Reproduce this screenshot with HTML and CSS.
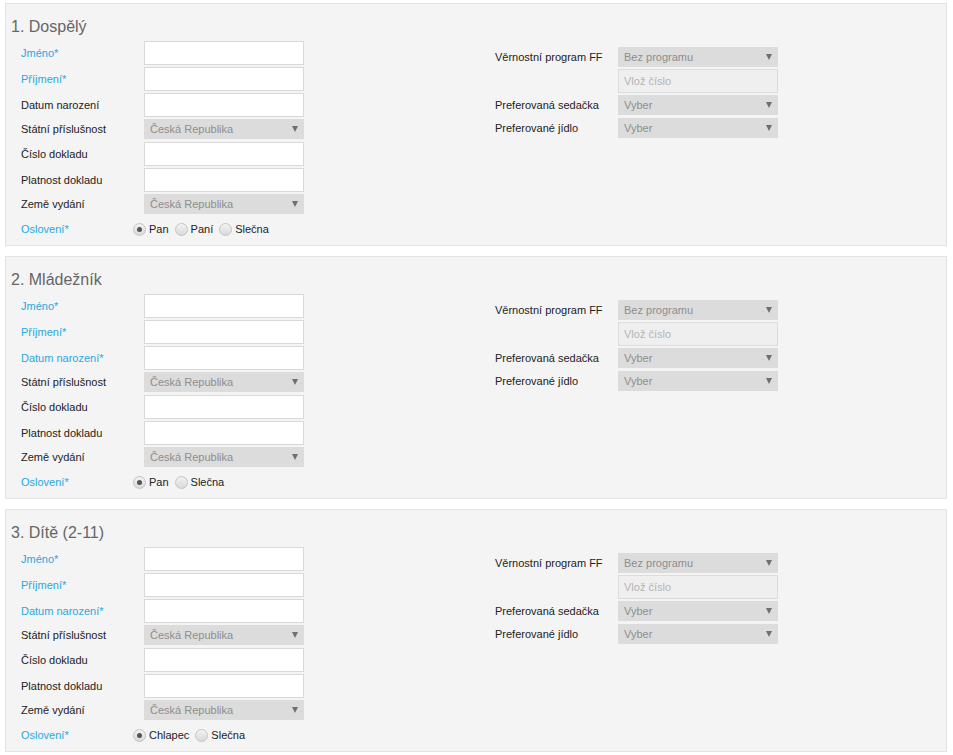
FILE: index.html
```html
<!DOCTYPE html>
<html lang="cs">
<head>
<meta charset="utf-8">
<title>Cestující</title>
<link rel="stylesheet" href="styles.css">
</head>
<body>
<div class="page">

  <section class="pax">
    <h2 class="pax-title">1. Dospělý</h2>
    <div class="pax-body">
      <div class="col col-left">
        <div class="row"><span class="lbl req">Jméno*</span><span class="inp"></span></div>
        <div class="row"><span class="lbl req">Příjmení*</span><span class="inp"></span></div>
        <div class="row"><span class="lbl">Datum narození</span><span class="inp"></span></div>
        <div class="row row-sel"><span class="lbl">Státní příslušnost</span><span class="sel">Česká Republika<i class="arr"></i></span></div>
        <div class="row"><span class="lbl">Číslo dokladu</span><span class="inp"></span></div>
        <div class="row"><span class="lbl">Platnost dokladu</span><span class="inp"></span></div>
        <div class="row"><span class="lbl">Země vydání</span><span class="sel">Česká Republika<i class="arr"></i></span></div>
        <div class="row row-radio"><span class="lbl lbl-radio req">Oslovení*</span>
          <span class="radios">
            <span class="radio on"></span><span class="rtxt">Pan</span>
            <span class="radio"></span><span class="rtxt">Paní</span>
            <span class="radio"></span><span class="rtxt">Slečna</span>
          </span>
        </div>
      </div>
      <div class="col col-right">
        <div class="row"><span class="lbl">Věrnostní program FF</span><span class="sel">Bez programu<i class="arr"></i></span></div>
        <div class="row"><span class="lbl"></span><span class="inp inp-dis">Vlož číslo</span></div>
        <div class="row row-sel"><span class="lbl">Preferovaná sedačka</span><span class="sel">Vyber<i class="arr"></i></span></div>
        <div class="row"><span class="lbl">Preferované jídlo</span><span class="sel">Vyber<i class="arr"></i></span></div>
      </div>
    </div>
  </section>

  <section class="pax">
    <h2 class="pax-title">2. Mládežník</h2>
    <div class="pax-body">
      <div class="col col-left">
        <div class="row"><span class="lbl req">Jméno*</span><span class="inp"></span></div>
        <div class="row"><span class="lbl req">Příjmení*</span><span class="inp"></span></div>
        <div class="row"><span class="lbl req">Datum narození*</span><span class="inp"></span></div>
        <div class="row row-sel"><span class="lbl">Státní příslušnost</span><span class="sel">Česká Republika<i class="arr"></i></span></div>
        <div class="row"><span class="lbl">Číslo dokladu</span><span class="inp"></span></div>
        <div class="row"><span class="lbl">Platnost dokladu</span><span class="inp"></span></div>
        <div class="row"><span class="lbl">Země vydání</span><span class="sel">Česká Republika<i class="arr"></i></span></div>
        <div class="row row-radio"><span class="lbl lbl-radio req">Oslovení*</span>
          <span class="radios">
            <span class="radio on"></span><span class="rtxt">Pan</span>
            <span class="radio"></span><span class="rtxt">Slečna</span>
          </span>
        </div>
      </div>
      <div class="col col-right">
        <div class="row"><span class="lbl">Věrnostní program FF</span><span class="sel">Bez programu<i class="arr"></i></span></div>
        <div class="row"><span class="lbl"></span><span class="inp inp-dis">Vlož číslo</span></div>
        <div class="row row-sel"><span class="lbl">Preferovaná sedačka</span><span class="sel">Vyber<i class="arr"></i></span></div>
        <div class="row"><span class="lbl">Preferované jídlo</span><span class="sel">Vyber<i class="arr"></i></span></div>
      </div>
    </div>
  </section>

  <section class="pax">
    <h2 class="pax-title">3. Dítě (2-11)</h2>
    <div class="pax-body">
      <div class="col col-left">
        <div class="row"><span class="lbl req">Jméno*</span><span class="inp"></span></div>
        <div class="row"><span class="lbl req">Příjmení*</span><span class="inp"></span></div>
        <div class="row"><span class="lbl req">Datum narození*</span><span class="inp"></span></div>
        <div class="row row-sel"><span class="lbl">Státní příslušnost</span><span class="sel">Česká Republika<i class="arr"></i></span></div>
        <div class="row"><span class="lbl">Číslo dokladu</span><span class="inp"></span></div>
        <div class="row"><span class="lbl">Platnost dokladu</span><span class="inp"></span></div>
        <div class="row"><span class="lbl">Země vydání</span><span class="sel">Česká Republika<i class="arr"></i></span></div>
        <div class="row row-radio"><span class="lbl lbl-radio req">Oslovení*</span>
          <span class="radios">
            <span class="radio on"></span><span class="rtxt">Chlapec</span>
            <span class="radio"></span><span class="rtxt">Slečna</span>
          </span>
        </div>
      </div>
      <div class="col col-right">
        <div class="row"><span class="lbl">Věrnostní program FF</span><span class="sel">Bez programu<i class="arr"></i></span></div>
        <div class="row"><span class="lbl"></span><span class="inp inp-dis">Vlož číslo</span></div>
        <div class="row row-sel"><span class="lbl">Preferovaná sedačka</span><span class="sel">Vyber<i class="arr"></i></span></div>
        <div class="row"><span class="lbl">Preferované jídlo</span><span class="sel">Vyber<i class="arr"></i></span></div>
      </div>
    </div>
  </section>

</div>
</body>
</html>
```
FILE: styles.css
```css
* { box-sizing: border-box; }
html, body { margin: 0; padding: 0; background: #fff; }
body {
  font-family: "Liberation Sans", Arial, sans-serif;
  font-size: 11px;
  color: #222;
}
.page {
  padding: 3px 0 0 5px;
}
.pax {
  width: 942px;
  background: #f4f4f4;
  border: 1px solid #e2e2e2;
  padding: 13px 0 6px 0;
  margin-bottom: 10px;
}
.pax-title {
  margin: 0 0 4px 5px;
  font-size: 16px;
  line-height: 20px;
  font-weight: normal;
  color: #666;
}
.pax-body {
  display: flex;
  padding-left: 15px;
}
.col-left { width: 474px; }
.col-right { padding-top: 6px; }
.row {
  display: flex;
  align-items: center;
  margin-bottom: 2px;
}
.row-sel { margin-bottom: 3px; }
.lbl {
  width: 123px;
  flex: none;
  line-height: 14px;
}
.req { color: #29a8df; }
.inp {
  width: 160px;
  height: 24px;
  background: #fff;
  border: 1px solid #d9d9d9;
  display: flex;
  align-items: center;
  padding-left: 5px;
}
.inp-dis {
  background: #efefef;
  border-color: #dcdcdc;
  color: #b4b4b4;
}
.sel {
  width: 160px;
  height: 20px;
  background: #dcdcdc;
  color: #8e8e8e;
  display: flex;
  align-items: center;
  justify-content: space-between;
  padding: 0 6px;
}
.arr {
  width: 0;
  height: 0;
  border-left: 3px solid transparent;
  border-right: 3px solid transparent;
  border-top: 6px solid #6f6f6f;
}
.row-radio {
  margin-top: 5px;
  height: 20px;
  margin-bottom: 0;
}
.lbl-radio { width: 112px; }
.radios {
  display: flex;
  align-items: center;
}
.radio {
  width: 13px;
  height: 13px;
  border-radius: 50%;
  border: 1px solid #c4c4c4;
  background: linear-gradient(#f2f2f2, #dadada);
  margin-right: 3px;
  position: relative;
  flex: none;
}
.radio.on::after {
  content: "";
  position: absolute;
  left: 3px;
  top: 3px;
  width: 5px;
  height: 5px;
  border-radius: 50%;
  background: #555;
}
.rtxt { margin-right: 6px; color: #222; }
```
